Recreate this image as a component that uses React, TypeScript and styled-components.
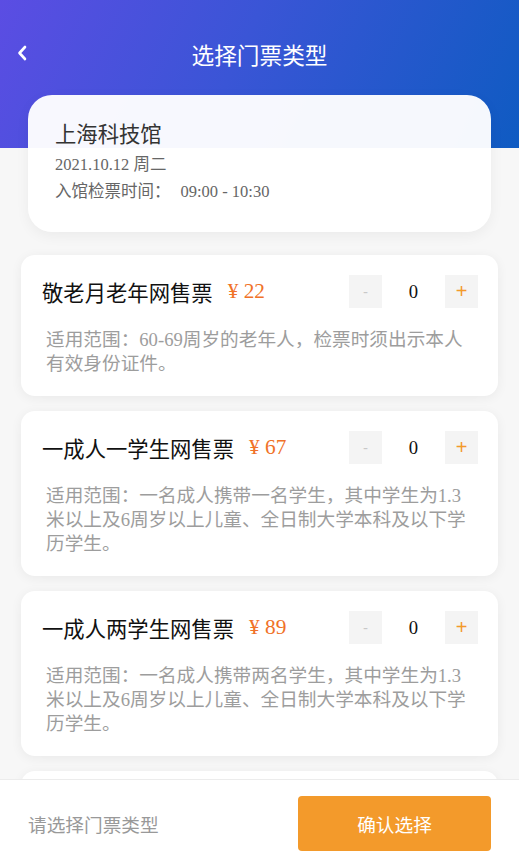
import React, { useState } from "react";
import styled, { createGlobalStyle } from "styled-components";

const GlobalStyle = createGlobalStyle`
  html, body { margin: 0; padding: 0; }
  body {
    font-family: "Liberation Serif", "Noto Sans CJK SC", serif;
    background: #f7f7f7;
  }
  * { box-sizing: border-box; }
`;

const Page = styled.div`
  height: 100vh;
  display: flex;
  flex-direction: column;
  overflow: hidden;
  background: #f7f7f7;
`;

const Scroll = styled.div`
  flex: 1;
  overflow: hidden;
  background:
    linear-gradient(115deg, #5b4de3 0%, #3a55d6 45%, #0f5bc2 100%) top / 100% 148px no-repeat,
    #f7f7f7;
`;

const NavBar = styled.div`
  margin-top: 29px;
  height: 50px;
  display: flex;
  align-items: center;
  justify-content: center;
  position: relative;
`;

const BackButton = styled.button`
  position: absolute;
  left: 12px;
  top: 50%;
  transform: translateY(-50%);
  margin-top: -1px;
  width: 20px;
  height: 24px;
  padding: 0;
  border: none;
  background: transparent;
  display: flex;
  align-items: center;
  justify-content: center;
`;

const NavTitle = styled.h1`
  margin: 0;
  font-size: 22.67px;
  font-weight: 400;
  color: #fff;
  letter-spacing: 0;
`;

const InfoCard = styled.section`
  margin: 16px 28px 0;
  padding: 26px 27px 27px;
  border-radius: 24px;
  background: rgba(255, 255, 255, 0.96);
  box-shadow: 0 4px 14px rgba(0, 0, 0, 0.05);
`;

const VenueName = styled.div`
  font-size: 21.33px;
  color: #333;
  line-height: 28px;
`;

const InfoLine = styled.div<{ $first?: boolean }>`
  font-size: 16.5px;
  color: #666;
  line-height: 27px;
  margin-top: ${(p) => (p.$first ? "2px" : "0")};
`;

const TimeValue = styled.span`
  margin-left: 10px;
`;

const TicketList = styled.div`
  padding: 23px 21px 0 21px;
  display: flex;
  flex-direction: column;
  gap: 15px;
`;

const TicketCard = styled.article`
  background: #fff;
  border-radius: 14px;
  padding: 20px 20px 20px 21px;
  box-shadow: 0 2px 12px rgba(0, 0, 0, 0.06);
`;

const TicketHead = styled.div`
  display: flex;
  align-items: center;
  height: 33px;
`;

const TicketName = styled.span`
  font-size: 21.33px;
  color: #111;
`;

const Price = styled.span`
  margin-left: 15px;
  font-size: 21.33px;
  color: #f07228;
  flex: 1;
`;

const Stepper = styled.div`
  display: flex;
  align-items: center;
`;

const StepButton = styled.button<{ $active?: boolean }>`
  width: 33px;
  height: 33px;
  border: none;
  padding: 0;
  background: #f4f4f4;
  color: ${(p) => (p.$active ? "#f39a2b" : "#c8c8c8")};
  font-family: "Liberation Sans", sans-serif;
  font-size: ${(p) => (p.$active ? "20px" : "15px")};
  line-height: 33px;
`;

const Count = styled.span`
  width: 63px;
  text-align: center;
  font-size: 18.67px;
  color: #111;
`;

const Desc = styled.p`
  margin: 20px 3px 0 4px;
  font-size: 18.67px;
  line-height: 24px;
  color: #9d9d9d;
`;

const Footer = styled.footer`
  height: 88px;
  flex-shrink: 0;
  background: #fff;
  border-top: 1px solid #ececec;
  display: flex;
  align-items: center;
  justify-content: space-between;
  padding: 0 28px;
`;

const Hint = styled.span`
  font-size: 18.67px;
  color: #999;
`;

const ConfirmButton = styled.button`
  width: 193px;
  height: 55px;
  border: none;
  border-radius: 4px;
  background: #f39a2b;
  color: #fff;
  font-family: "Liberation Serif", "Noto Sans CJK SC", serif;
  font-size: 18.67px;
`;

type Ticket = { name: string; price: number; desc: string };

const tickets: Ticket[] = [
  {
    name: "敬老月老年网售票",
    price: 22,
    desc: "适用范围：60-69周岁的老年人，检票时须出示本人有效身份证件。",
  },
  {
    name: "一成人一学生网售票",
    price: 67,
    desc: "适用范围：一名成人携带一名学生，其中学生为1.3米以上及6周岁以上儿童、全日制大学本科及以下学历学生。",
  },
  {
    name: "一成人两学生网售票",
    price: 89,
    desc: "适用范围：一名成人携带两名学生，其中学生为1.3米以上及6周岁以上儿童、全日制大学本科及以下学历学生。",
  },
  {
    name: "一成人三学生网售票",
    price: 109,
    desc: "适用范围：一名成人携带三名学生，其中学生为1.3米以上及6周岁以上儿童、全日制大学本科及以下学历学生。",
  },
];

function TicketItem({ t }: { t: Ticket }) {
  const [n, setN] = useState(0);
  return (
    <TicketCard>
      <TicketHead>
        <TicketName>{t.name}</TicketName>
        <Price>¥ {t.price}</Price>
        <Stepper>
          <StepButton onClick={() => setN(Math.max(0, n - 1))}>-</StepButton>
          <Count>{n}</Count>
          <StepButton $active onClick={() => setN(n + 1)}>+</StepButton>
        </Stepper>
      </TicketHead>
      <Desc>{t.desc}</Desc>
    </TicketCard>
  );
}

export default function App() {
  return (
    <>
      <GlobalStyle />
      <Page>
        <Scroll>
          <NavBar>
            <BackButton aria-label="返回">
              <svg width="12" height="18" viewBox="0 0 12 18">
                <path d="M9 3 L3.5 9 L9 15" fill="none" stroke="#fff" strokeWidth="2.6" strokeLinecap="round" strokeLinejoin="round" />
              </svg>
            </BackButton>
            <NavTitle>选择门票类型</NavTitle>
          </NavBar>
          <InfoCard>
            <VenueName>上海科技馆</VenueName>
            <InfoLine $first>2021.10.12 周二</InfoLine>
            <InfoLine>
              入馆检票时间：<TimeValue>09:00 - 10:30</TimeValue>
            </InfoLine>
          </InfoCard>
          <TicketList>
            {tickets.map((t) => (
              <TicketItem key={t.name} t={t} />
            ))}
          </TicketList>
        </Scroll>
        <Footer>
          <Hint>请选择门票类型</Hint>
          <ConfirmButton>确认选择</ConfirmButton>
        </Footer>
      </Page>
    </>
  );
}
